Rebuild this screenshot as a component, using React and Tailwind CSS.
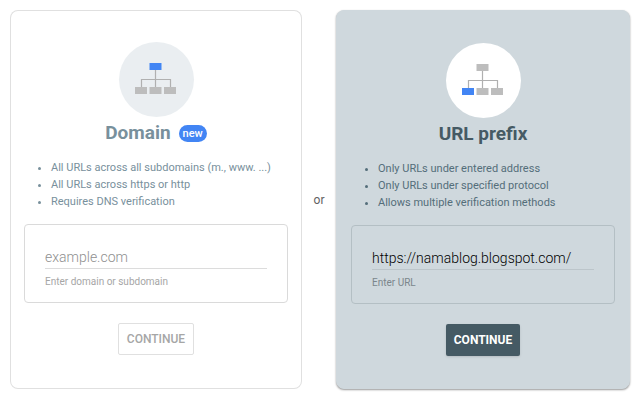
import { useState } from 'react';
import clsx from 'clsx';

const properties = [
  {
    id: 'domain',
    title: 'Domain',
    isNew: true,
    points: [
      'All URLs across all subdomains (m., www. ...)',
      'All URLs across https or http',
      'Requires DNS verification',
    ],
    placeholder: 'example.com',
    hint: 'Enter domain or subdomain',
    initial: '',
  },
  {
    id: 'prefix',
    title: 'URL prefix',
    isNew: false,
    points: [
      'Only URLs under entered address',
      'Only URLs under specified protocol',
      'Allows multiple verification methods',
    ],
    placeholder: 'https://www.example.com',
    hint: 'Enter URL',
    initial: 'https://namablog.blogspot.com/',
  },
];

// the blue node shows which part of the site gets verified
function SiteTree({ domain }) {
  return (
    <svg width="42" height="34" viewBox="0 0 42 34" aria-hidden="true">
      <path d="M20.5 7v17M6.5 24v-7.5h29V24" fill="none" stroke="#b0b0b0" strokeWidth="1.2" />
      <rect x="14.5" y="0" width="12" height="7" fill={domain ? '#4285f4' : '#bdbdbd'} />
      <rect x="0" y="24" width="12" height="7" fill={domain ? '#bdbdbd' : '#4285f4'} />
      <rect x="14.5" y="24" width="12" height="7" fill="#bdbdbd" />
      <rect x="29" y="24" width="12" height="7" fill="#bdbdbd" />
    </svg>
  );
}

function PropertyCard({ property, active, value, onChange }) {
  return (
    <form
      onSubmit={(e) => e.preventDefault()}
      className={clsx(
        'flex min-w-0 flex-1 flex-col items-center rounded-lg px-3.5 py-8',
        active
          ? 'border border-[#cfd8dd] bg-[#cfd8dd] shadow-[0_1px_2px_rgba(0,0,0,0.4)]'
          : 'bg-white ring-1 ring-[#e0e0e0] ring-inset',
      )}
    >
      <div className={clsx('flex size-[75px] items-center justify-center rounded-full', active ? 'bg-white' : 'bg-[#eaeef1]')}>
        <SiteTree domain={property.id === 'domain'} />
      </div>

      <div className="mt-1 flex items-center gap-2">
        <h2 className={clsx('text-[19px] leading-6 font-bold', active ? 'text-[#455a64]' : 'text-[#78909c]')}>
          {property.title}
        </h2>
        {property.isNew && (
          <span className="rounded-full bg-[#4285f4] px-1 text-[11px] leading-[17px] font-medium text-white">new</span>
        )}
      </div>

      <ul
        className={clsx(
          'mt-3.5 list-disc self-stretch pl-[27px] text-[11px] leading-[17px]',
          active ? 'text-[#546e7a]' : 'text-[#78909c]',
        )}
      >
        {property.points.map((point) => (
          <li key={point}>{point}</li>
        ))}
      </ul>

      <div
        className={clsx(
          'mt-3.5 flex flex-col self-stretch rounded border px-5 pt-5 pb-3',
          active ? 'border-[#b4bfc4]' : 'border-[#dadada]',
        )}
      >
        <input
          id={property.id}
          type="text"
          value={value}
          placeholder={property.placeholder}
          onChange={(e) => onChange(e.target.value)}
          className={clsx(
            'h-6 w-full border-b bg-transparent text-[14px] font-light text-black outline-none placeholder:text-[#8f8f8f]',
            active ? 'border-[#bcc5ca]' : 'border-[#dcdcdc]',
          )}
        />
        <label
          htmlFor={property.id}
          className={clsx('mt-1 text-[10px] leading-[17px]', active ? 'text-[#7b868c]' : 'text-[#a6a6a6]')}
        >
          {property.hint}
        </label>
      </div>

      <button
        type="submit"
        disabled={!value}
        className={clsx(
          'mt-5 h-8 rounded-xs px-2 text-[12px]',
          active ? 'bg-[#455a64] font-bold text-white shadow-sm' : 'border border-[#e0e0e0] font-medium text-[#a6a6a6]',
        )}
      >
        CONTINUE
      </button>
    </form>
  );
}

export default function App() {
  const [values, setValues] = useState({ domain: '', prefix: properties[1].initial });

  const card = (property) => (
    <PropertyCard
      property={property}
      active={property.id === 'prefix'}
      value={values[property.id]}
      onChange={(value) => setValues((current) => ({ ...current, [property.id]: value }))}
    />
  );

  return (
    <main className="flex items-stretch bg-white p-2.5 font-['Roboto',sans-serif]">
      {card(properties[0])}
      <span className="w-[34px] self-center text-center text-[12px] text-[#616161]">or</span>
      {card(properties[1])}
    </main>
  );
}
